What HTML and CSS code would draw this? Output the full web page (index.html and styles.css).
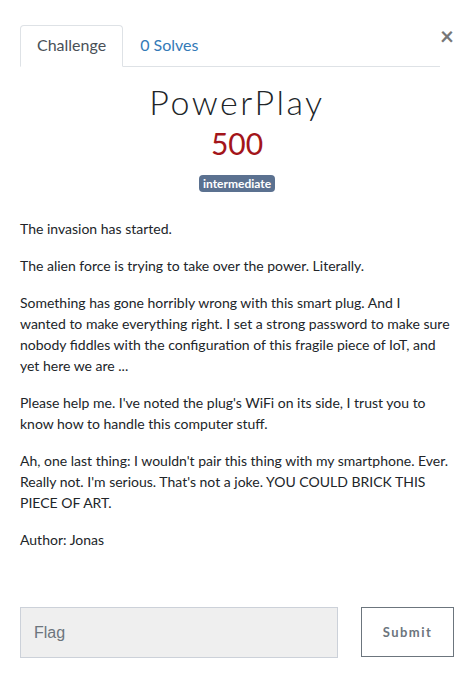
FILE: index.html
```html
<!DOCTYPE html>
<html lang="en">
<head>
<meta charset="utf-8">
<title>PowerPlay</title>
<link rel="stylesheet" href="styles.css">
</head>
<body>
<div class="modal">
  <div class="header">
    <ul class="tabs">
      <li class="tab active">Challenge</li>
      <li class="tab">0 Solves</li>
    </ul>
    <button class="close" type="button">&times;</button>
  </div>
  <h2 class="title">PowerPlay</h2>
  <h3 class="value">500</h3>
  <div class="tags"><span class="badge">intermediate</span></div>
  <div class="desc">
    <p>The invasion has started.</p>
    <p>The alien force is trying to take over the power. Literally.</p>
    <p>Something has gone horribly wrong with this smart plug. And I<br>wanted to make everything right. I set a strong password to make sure nobody fiddles with the configuration of this fragile piece of IoT, and yet here we are ...</p>
    <p>Please help me. I've noted the plug's WiFi on its side, I trust you to know how to handle this computer stuff.</p>
    <p>Ah, one last thing: I wouldn't pair this thing with my smartphone. Ever. Really not. I'm serious. That's not a joke. YOU COULD BRICK THIS PIECE OF ART.</p>
    <p>Author: Jonas</p>
  </div>
  <div class="submit-row">
    <input class="flag" type="text" placeholder="Flag">
    <button class="submit" type="button">Submit</button>
  </div>
</div>
</body>
</html>
```
FILE: styles.css
```css
* { box-sizing: border-box; }
html, body { margin: 0; padding: 0; background: #fff; }
body {
  font-family: Lato, "Open Sans", sans-serif;
  color: #212529;
  font-size: 14px;
  line-height: 21px;
}
.modal { padding: 25px 20px 0 20px; }
.header { display: flex; align-items: flex-start; }
.tabs {
  flex: 1;
  display: flex;
  list-style: none;
  margin: 0;
  padding: 0;
  border-bottom: 1px solid #dee2e6;
}
.tab {
  font-size: 16px;
  line-height: 24px;
  padding: 7px 16px 9px;
  border: 1px solid transparent;
  border-top-left-radius: 4px;
  border-top-right-radius: 4px;
  margin-bottom: -1px;
  color: #337ab7;
}
.tab.active {
  color: #495057;
  border-color: #dee2e6 #dee2e6 #fff;
  background: #fff;
}
.close {
  width: 14px;
  margin: 0;
  padding: 0;
  border: 0;
  background: none;
  font-family: Lato, sans-serif;
  font-weight: 700;
  font-size: 24px;
  line-height: 22px;
  color: #777;
  text-align: right;
}
.title {
  margin: 15px 0 0 0;
  text-align: center;
  font-family: Lato, sans-serif;
  font-weight: 300;
  font-size: 34px;
  letter-spacing: 2.5px;
  line-height: 40px;
  color: #212529;
}
.value {
  margin: 3px 0 0 0;
  text-align: center;
  font-weight: 400;
  font-size: 30px;
  line-height: 36px;
  color: #a3151a;
}
.tags { text-align: center; margin-top: 13px; line-height: 17px; }
.badge {
  display: inline-block;
  background: #5b7190;
  color: #fff;
  font-size: 12px;
  font-weight: 700;
  line-height: 17px;
  padding: 0 4px;
  border-radius: 4px;
}
.desc { margin-top: 26px; }
.desc p { margin: 0 0 16px 0; }
.submit-row {
  display: flex;
  justify-content: space-between;
  align-items: flex-start;
  margin-top: 57px;
}
.flag {
  width: 318px;
  height: 51px;
  background: #efefef;
  border: 1px solid #ccd1d9;
  border-radius: 0;
  padding: 0 13px;
  font-family: "Liberation Sans", Arial, sans-serif;
  font-size: 16px;
  color: #495057;
}
.flag::placeholder { color: #6c757d; }
.submit {
  width: 93px;
  height: 50px;
  background: #fff;
  border: 1px solid #6c757d;
  font-family: Lato, sans-serif;
  font-weight: 700;
  font-size: 13px;
  letter-spacing: 1.5px;
  color: #6c757d;
}
```
